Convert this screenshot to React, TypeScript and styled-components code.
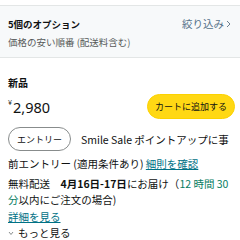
import React from "react";
import styled, { createGlobalStyle } from "styled-components";

const GlobalStyle = createGlobalStyle`
  html, body {
    margin: 0;
    padding: 0;
    background: #ffffff;
    width: 240px;
    height: 240px;
    overflow: hidden;
  }
  body {
    font-family: "Noto Sans CJK JP", "Noto Sans", sans-serif;
    color: #0f1111;
  }
`;

const Page = styled.div`
  width: 240px;
  height: 240px;
  padding-top: 5px;
  box-sizing: border-box;
  overflow: hidden;
`;

const OptionsBar = styled.div`
  display: flex;
  justify-content: space-between;
  align-items: flex-start;
  background: #f7f9fa;
  border-top: 1px solid #e3e6e6;
  border-bottom: 1px solid #e3e6e6;
  padding: 11px 8px 8px 8px;
  height: 53px;
  box-sizing: border-box;
`;

const OptionsText = styled.div`
  display: flex;
  flex-direction: column;
  gap: 4px;
`;

const OptionsTitle = styled.div`
  font-size: 9.5px;
  font-weight: 700;
  line-height: 14px;
`;

const OptionsSub = styled.div`
  font-size: 9.5px;
  line-height: 14px;
  color: #565959;
`;

const Filter = styled.div`
  font-size: 10.5px;
  line-height: 14px;
  color: #557289;
  display: flex;
  align-items: center;
  gap: 2px;
  margin-right: 1px;
`;

const Offer = styled.div`
  padding: 18px 8px 0 8px;
`;

const Condition = styled.div`
  font-size: 10px;
  font-weight: 700;
  line-height: 14px;
`;

const PriceRow = styled.div`
  display: flex;
  justify-content: space-between;
  align-items: center;
  margin-top: 4px;
`;

const Price = styled.div`
  font-family: "Noto Sans", sans-serif;
  font-size: 14.5px;
  line-height: 18px;
  display: flex;
  align-items: flex-start;
`;

const Yen = styled.span`
  font-size: 7px;
  line-height: 10px;
  margin-right: 1px;
`;

const CartButton = styled.button`
  background: #ffd814;
  border: 1px solid #fcd200;
  border-radius: 13px;
  height: 25px;
  padding: 0 7px;
  font-family: "Noto Sans CJK JP", sans-serif;
  font-size: 9px;
  color: #0f1111;
  margin-right: -3px;
  white-space: nowrap;
`;

const EntryRow = styled.div`
  display: flex;
  align-items: center;
  gap: 10px;
  margin-top: 8px;
  font-size: 10.5px;
  white-space: nowrap;
`;

const EntryPill = styled.span`
  flex-shrink: 0;
  border: 1px solid #888c8c;
  border-radius: 12px;
  height: 24px;
  box-sizing: border-box;
  padding: 0 8px;
  display: inline-flex;
  align-items: center;
  font-size: 9px;
  color: #0f1111;
`;

const Line = styled.div<{ $gap?: number }>`
  font-size: 10.5px;
  line-height: 16.5px;
  margin-top: ${({ $gap }) => $gap ?? 0}px;
  white-space: nowrap;
  overflow: hidden;
`;

const Link = styled.a`
  color: #007185;
  text-decoration: underline;
`;

const Bold = styled.b`
  font-weight: 700;
`;

const Green = styled.span`
  color: #067d62;
`;

const More = styled.div`
  display: flex;
  align-items: center;
  gap: 4px;
  font-size: 10.5px;
  line-height: 16.5px;
  color: #0f1111;
`;

const Bottom = styled.div`
  border-top: 1px solid #e3e6e6;
  margin-top: 6px;
`;

export default function App() {
  return (
    <Page>
      <GlobalStyle />
      <OptionsBar>
        <OptionsText>
          <OptionsTitle>5個のオプション</OptionsTitle>
          <OptionsSub>価格の安い順番 (配送料含む)</OptionsSub>
        </OptionsText>
        <Filter>
          絞り込み
          <svg width="5" height="8" viewBox="0 0 5 8">
            <path d="M1 1 L4 4 L1 7" fill="none" stroke="#6b7f8e" strokeWidth="1" />
          </svg>
        </Filter>
      </OptionsBar>
      <Offer>
        <Condition>新品</Condition>
        <PriceRow>
          <Price>
            <Yen>¥</Yen>2,980
          </Price>
          <CartButton>カートに追加する</CartButton>
        </PriceRow>
        <EntryRow>
          <EntryPill>エントリー</EntryPill>
          <span>Smile Sale ポイントアップに事</span>
        </EntryRow>
        <Line $gap={5}>
          前エントリー (適用条件あり) <Link>細則を確認</Link>
        </Line>
        <Line $gap={3}>
          無料配送　<Bold>4月16日-17日</Bold>にお届け（<Green>12 時間 30</Green>
        </Line>
        <Line>
          <Green>分</Green>以内にご注文の場合)
        </Line>
        <Line>
          <Link>詳細を見る</Link>
        </Line>
        <More>
          <svg width="6" height="5" viewBox="0 0 6 5">
            <path d="M1 1 L3 3.5 L5 1" fill="none" stroke="#8a8f8f" strokeWidth="1" />
          </svg>
          もっと見る
        </More>
      </Offer>
      <Bottom />
    </Page>
  );
}
